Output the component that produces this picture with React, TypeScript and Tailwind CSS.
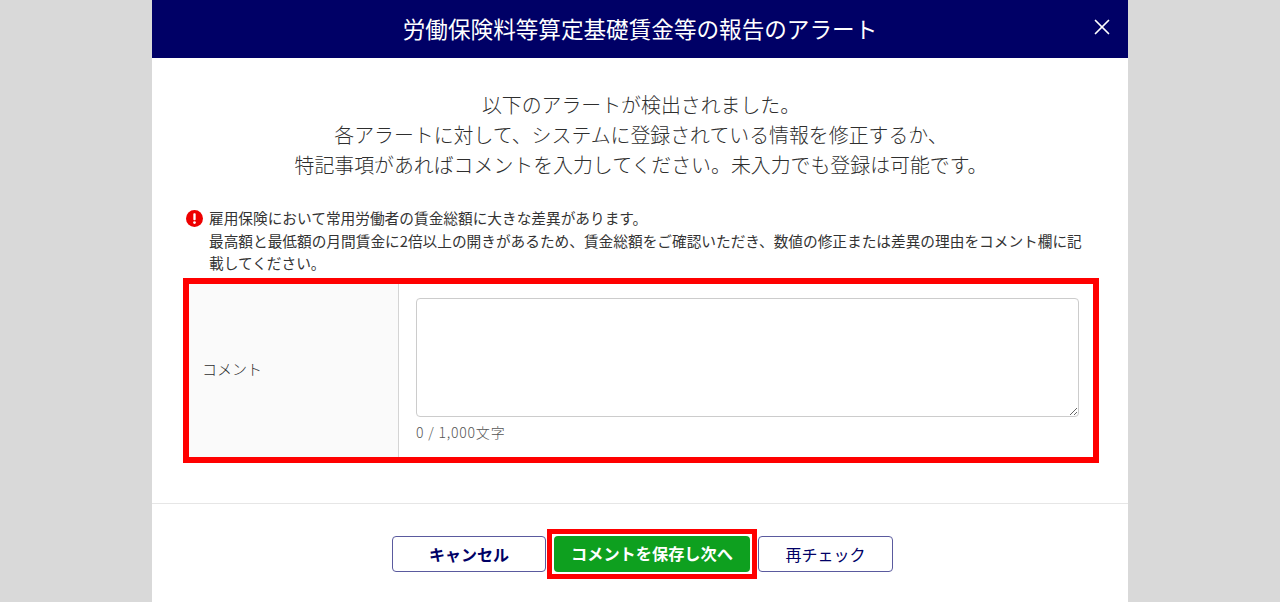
import { X } from 'lucide-react'

const jpFont = "font-['Noto_Sans_CJK_JP','Noto_Sans',sans-serif]"

const App = () => {
    return (
        <div className={`h-[602px] w-full overflow-hidden bg-[#d9d9d9] ${jpFont}`}>
            <div className="mx-auto h-full w-[976px] bg-white">
                <header className="relative flex h-[58px] items-center justify-center bg-[#000066] pb-[1px] text-[22.6px] text-white">
                    <h1>労働保険料等算定基礎賃金等の報告のアラート</h1>
                    <button className="absolute right-[13px] top-[14px] text-white">
                        <X className="h-[26px] w-[26px]" strokeWidth={1.6} />
                    </button>
                </header>

                <div className="flex h-[446px] flex-col border-b border-[#e6e6e6] pl-[31px] pr-[29px]">
                    <p className="mt-[32px] text-center text-[19.9px] font-light leading-[30px] text-[#2e2e2e]">
                        以下のアラートが検出されました。<br />
                        各アラートに対して、システムに登録されている情報を修正するか、<br />
                        特記事項があればコメントを入力してください。未入力でも登録は可能です。
                    </p>

                    <div className="mt-[27px] flex gap-[6px] pl-[3px] text-[14.68px] leading-[22.5px] text-[#333333]">
                        <svg viewBox="0 0 16 16" className="mt-[3px] h-[17px] w-[17px] shrink-0">
                            <circle cx="8" cy="8" r="8" fill="#ee0000" />
                            <rect x="6.9" y="3" width="2.2" height="6.6" rx="0.8" fill="#ffffff" />
                            <circle cx="8" cy="11.8" r="1.3" fill="#ffffff" />
                        </svg>
                        <p className="w-[880px]">
                            雇用保険において常用労働者の賃金総額に大きな差異があります。<br />
                            最高額と最低額の月間賃金に2倍以上の開きがあるため、賃金総額をご確認いただき、数値の修正または差異の理由をコメント欄に記載してください。
                        </p>
                    </div>

                    <div className="mt-[3px] flex h-[185px] border-[6px] border-[#ff0000]">
                        <div className="flex w-[210px] items-center border-r border-[#d4d4d4] bg-[#fafafa] pb-[2px] pl-[13px] text-[15px] font-light text-[#2e2e2e]">
                            コメント
                        </div>
                        <div className="flex-1 pl-[17px] pr-[14px] pt-[14px]">
                            <textarea className="block h-[119px] w-full rounded-[4px] border border-[#cccccc] bg-white" />
                            <p className="mt-[5px] text-[14px] font-light leading-[20px] tracking-[0.8px] text-[#555555]">0 / 1,000文字</p>
                        </div>
                    </div>
                </div>

                <div className="flex justify-center pl-[5px] pt-[25px]">
                    <div className="flex items-center">
                        <button className="h-[36px] w-[154px] rounded-[4px] border border-[#5a5a9e] bg-white pb-[1px] text-[16px] font-bold text-[#000066]">
                            キャンセル
                        </button>
                        <div className="ml-[1px] border-[5px] border-[#ff0000] bg-white p-[2px]">
                            <button className="block h-[36px] w-[196px] rounded-[4px] bg-[#0ea01f] pb-[1px] text-[16.2px] font-bold text-white">
                                コメントを保存し次へ
                            </button>
                        </div>
                        <button className="ml-[1px] h-[36px] w-[135px] rounded-[4px] border border-[#5a5a9e] bg-white pb-[1px] text-[16px] text-[#000066]">
                            再チェック
                        </button>
                    </div>
                </div>
            </div>
        </div>
    )
}

export default App
